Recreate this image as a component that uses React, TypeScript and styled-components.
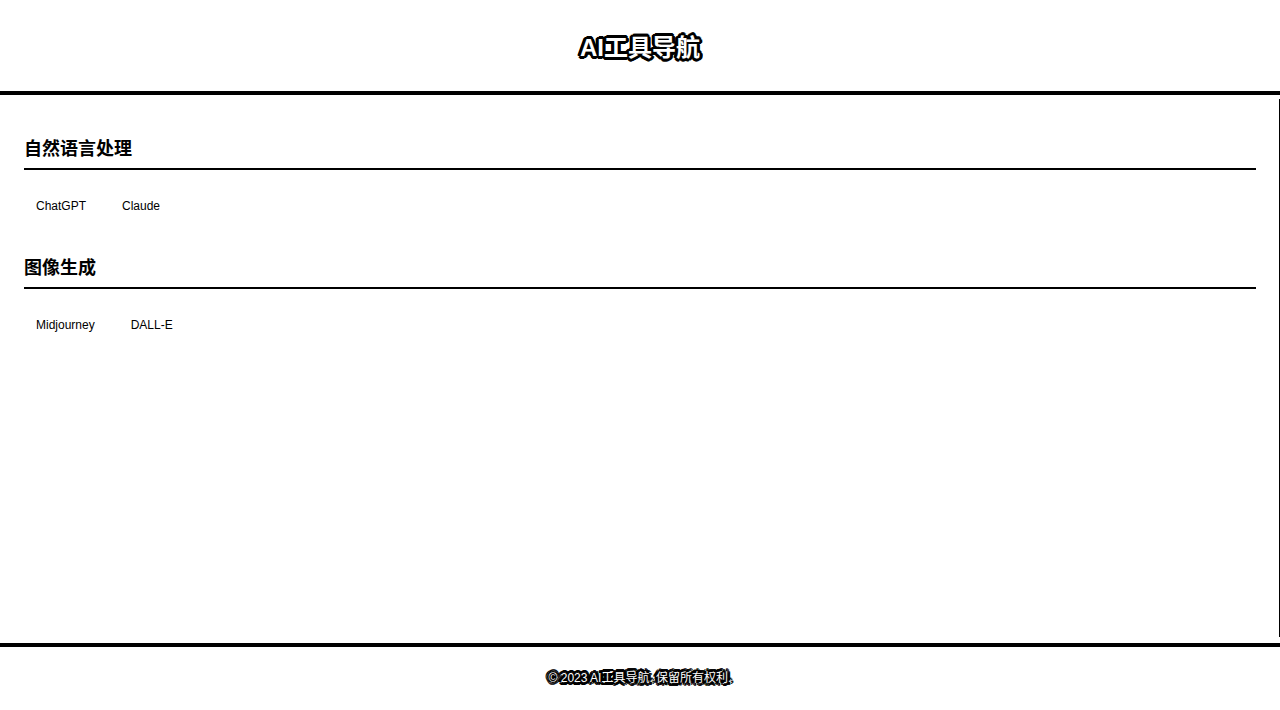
import styled, { createGlobalStyle } from "styled-components";

const GlobalStyle = createGlobalStyle`
  html, body {
    margin: 0;
    padding: 0;
    background: #fff;
  }
  body {
    font-family: "Liberation Sans", "Noto Sans CJK SC", sans-serif;
    color: #000;
  }
`;

// white text sitting in a solid black outline
const halo = `
  -2px -2px 0 #000, 0 -2px 0 #000, 2px -2px 0 #000,
  -2px 0 0 #000, 2px 0 0 #000,
  -2px 2px 0 #000, 0 2px 0 #000, 2px 2px 0 #000,
  -3px 0 0 #000, 3px 0 0 #000, 0 3px 0 #000, 0 -3px 0 #000,
  -3px -1px 0 #000, 3px 1px 0 #000, -1px 3px 0 #000, 1px -3px 0 #000,
  0 0 3px #000
`;

const Page = styled.div`
  display: flex;
  flex-direction: column;
  height: 710px;
`;

const Header = styled.header`
  height: 91px;
  display: flex;
  align-items: center;
  justify-content: center;
  border-bottom: 4px solid #000;
`;

const Title = styled.h1`
  margin: 0;
  font-size: 24px;
  font-weight: 700;
  color: #fff;
  text-shadow: ${halo};
`;

const Main = styled.main`
  flex: 1;
  display: flex;
  padding: 4px 0 6px;
`;

const Content = styled.div`
  flex: 1;
  border-right: 1px solid #000;
  padding: 38px 23px 0 24px;
`;

const Section = styled.section`
  margin-bottom: 34px;
`;

const SectionTitle = styled.h2`
  margin: 0;
  font-size: 18px;
  line-height: 24px;
  font-weight: 700;
  padding-bottom: 7px;
  border-bottom: 2px solid #000;
`;

const LinkRow = styled.div`
  display: flex;
  gap: 12px;
  margin-top: 20px;
`;

const ToolLink = styled.a`
  display: block;
  padding: 8px 12px;
  font-size: 12px;
  line-height: 16px;
  color: #000;
  text-decoration: none;
`;

const Footer = styled.footer`
  border-top: 4px solid #000;
  height: 63px;
  display: flex;
  align-items: center;
  justify-content: center;
`;

const FooterText = styled.p`
  margin: 0 0 4px;
  font-size: 12px;
  color: #fff;
  text-shadow: ${halo};
`;

const categories = [
  { name: "自然语言处理", tools: ["ChatGPT", "Claude"] },
  { name: "图像生成", tools: ["Midjourney", "DALL-E"] },
];

export default function App() {
  return (
    <Page>
      <GlobalStyle />
      <Header>
        <Title>AI工具导航</Title>
      </Header>
      <Main>
        <Content>
          {categories.map((c) => (
            <Section key={c.name}>
              <SectionTitle>{c.name}</SectionTitle>
              <LinkRow>
                {c.tools.map((t) => (
                  <ToolLink key={t} href="#">
                    {t}
                  </ToolLink>
                ))}
              </LinkRow>
            </Section>
          ))}
        </Content>
      </Main>
      <Footer>
        <FooterText>© 2023 AI工具导航. 保留所有权利.</FooterText>
      </Footer>
    </Page>
  );
}
